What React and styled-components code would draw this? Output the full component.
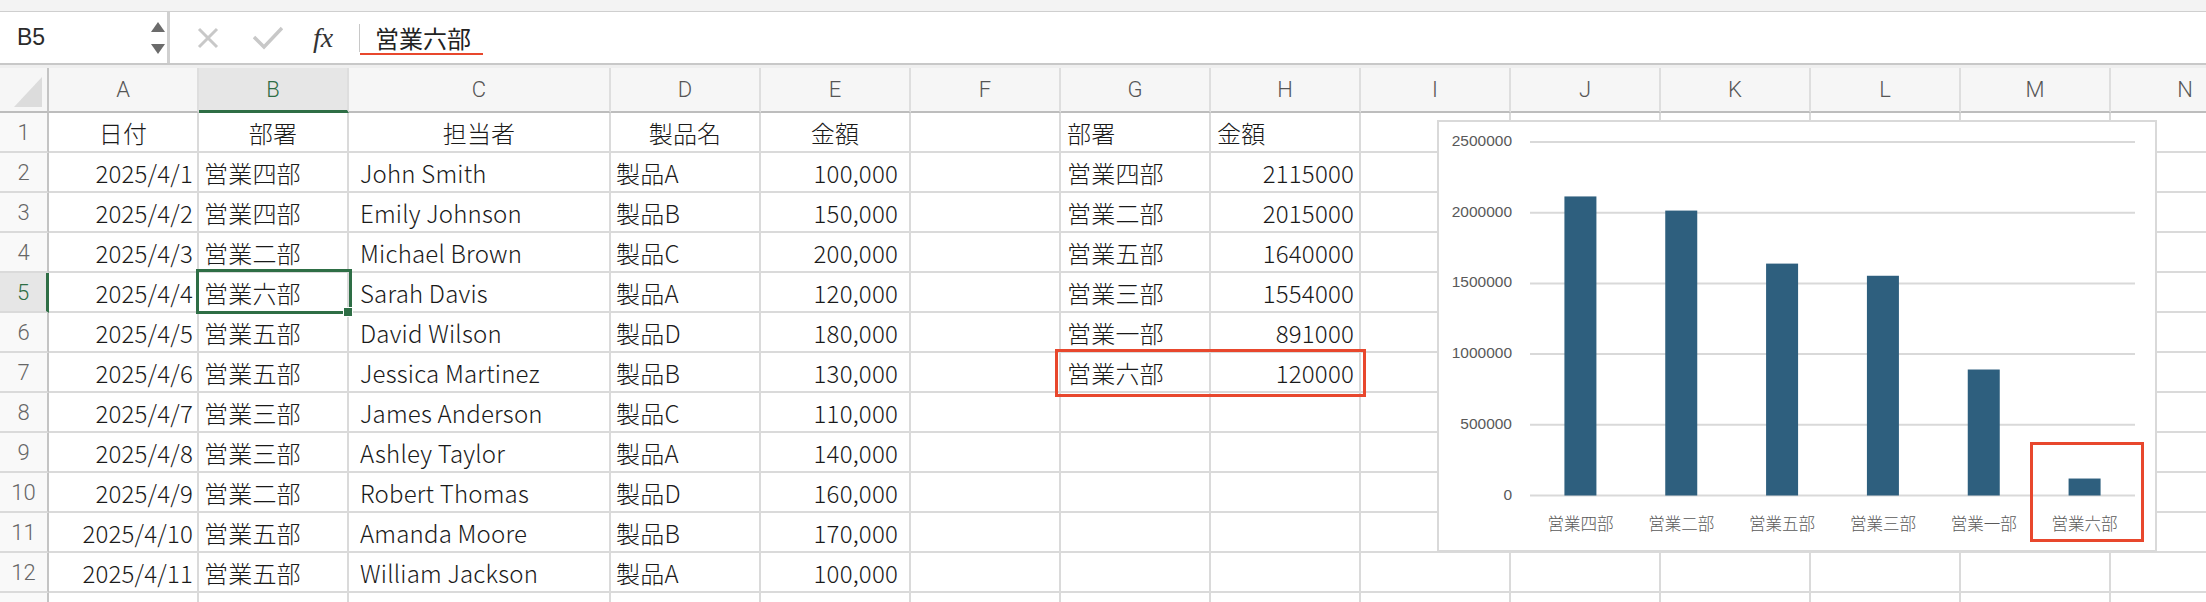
import React from "react";
import styled, { createGlobalStyle, css } from "styled-components";

const GREEN = "#2e6e45";
const RED = "#e8472d";
const GRID = "#dadada";

const COLS = ["A", "B", "C", "D", "E", "F", "G", "H", "I", "J", "K", "L", "M", "N"];
const WIDTHS = [150, 150, 262, 150, 150, 150, 150, 150, 150, 150, 150, 150, 150, 150];

// per column: alignment + inner padding
const COL_STYLE = {
  A: { align: "right", pad: "0 4px 0 0" },
  B: { align: "left", pad: "0 0 0 5px" },
  C: { align: "left", pad: "0 0 0 11px" },
  D: { align: "left", pad: "0 0 0 5px" },
  E: { align: "right", pad: "0 11px 0 0" },
  G: { align: "left", pad: "0 0 0 6px" },
  H: { align: "right", pad: "0 5px 0 0" }
};

const SALES = [
  ["2025/4/1", "営業四部", "John Smith", "製品A", "100,000"],
  ["2025/4/2", "営業四部", "Emily Johnson", "製品B", "150,000"],
  ["2025/4/3", "営業二部", "Michael Brown", "製品C", "200,000"],
  ["2025/4/4", "営業六部", "Sarah Davis", "製品A", "120,000"],
  ["2025/4/5", "営業五部", "David Wilson", "製品D", "180,000"],
  ["2025/4/6", "営業五部", "Jessica Martinez", "製品B", "130,000"],
  ["2025/4/7", "営業三部", "James Anderson", "製品C", "110,000"],
  ["2025/4/8", "営業三部", "Ashley Taylor", "製品A", "140,000"],
  ["2025/4/9", "営業二部", "Robert Thomas", "製品D", "160,000"],
  ["2025/4/10", "営業五部", "Amanda Moore", "製品B", "170,000"],
  ["2025/4/11", "営業五部", "William Jackson", "製品A", "100,000"],
  // row 13 is only a sliver at the bottom edge
  ["", "", "", "", ""]
];

const SUMMARY = [
  ["営業四部", 2115000],
  ["営業二部", 2015000],
  ["営業五部", 1640000],
  ["営業三部", 1554000],
  ["営業一部", 891000],
  ["営業六部", 120000]
];

const GlobalStyle = createGlobalStyle`
  html, body {
    margin: 0;
    padding: 0;
    background: #ffffff;
    overflow: hidden;
  }
  body {
    font-family: "Noto Sans CJK JP", "Liberation Sans", sans-serif;
    color: #1a1a1a;
  }
`;

const Window = styled.div`
  width: 2206px;
  height: 602px;
  display: flex;
  flex-direction: column;
  overflow: hidden;
`;

const TopStrip = styled.div`
  height: 11px;
  background: #f3f3f3;
  border-bottom: 1px solid #cfcfcf;
`;

const FormulaBar = styled.div`
  height: 51px;
  display: flex;
  background: #ffffff;
  border-bottom: 2px solid #c8c8c8;
`;

const NameBox = styled.div`
  width: 148px;
  padding: 0 2px 0 17px;
  display: flex;
  align-items: center;
  justify-content: space-between;
  border-right: 3px solid #d0d0d0;
  font-family: "Liberation Sans", sans-serif;
  font-size: 23px;
  color: #2b2b2b;
`;

const Spinner = styled.div`
  display: flex;
  flex-direction: column;
  gap: 12px;
`;

const Arrow = styled.span`
  width: 0;
  height: 0;
  border-left: 7px solid transparent;
  border-right: 7px solid transparent;
  ${p =>
    p.$down
      ? css`border-top: 10px solid #6b6b6b;`
      : css`border-bottom: 10px solid #6b6b6b;`}
`;

const FormulaArea = styled.div`
  flex: 1;
  display: flex;
  align-items: center;
  padding-left: 27px;
`;

const Tool = styled.div`
  display: flex;
  align-items: center;
  margin-left: ${p => p.$ml || 0}px;
`;

const Fx = styled.span`
  margin-left: 30px;
  width: 30px;
  font-family: "Liberation Serif", serif;
  font-style: italic;
  font-size: 28px;
  color: #333333;
  line-height: 1;
`;

const Divider = styled.span`
  margin-left: 16px;
  width: 1px;
  height: 28px;
  background: #c8c8c8;
`;

const FormulaText = styled.span`
  align-self: flex-start;
  margin-top: 11px;
  padding: 0 12px 0 15px;
  line-height: 30px;
  font-size: 24px;
  color: #222222;
  border-bottom: 2px solid ${RED};
`;

const Gap = styled.div`
  height: 3px;
  background: #efefef;
`;

const Sheet = styled.div`
  position: relative;
  flex: 1;
  overflow: hidden;
`;

const Grid = styled.div`
  display: grid;
  grid-template-columns: 49px ${WIDTHS.map(w => `${w}px`).join(" ")};
  grid-template-rows: 45px;
  grid-auto-rows: 40px;
`;

const Corner = styled.div`
  position: relative;
  background: #f6f6f6;
  border-right: 2px solid #c4c4c4;
  border-bottom: 2px solid #bdbdbd;
  &::after {
    content: "";
    position: absolute;
    right: 5px;
    bottom: 4px;
    width: 28px;
    height: 30px;
    background: #dcdcdc;
    clip-path: polygon(100% 0, 100% 100%, 0 100%);
  }
`;

const ColHead = styled.div`
  display: flex;
  align-items: center;
  justify-content: center;
  background: ${p => (p.$active ? "#e6e6e6" : "#f6f6f6")};
  border-right: 2px solid #dedede;
  border-bottom: ${p => (p.$active ? `3px solid ${GREEN}` : "2px solid #bdbdbd")};
  font-family: "Roboto", "Liberation Sans", sans-serif;
  font-weight: 300;
  font-size: 22px;
  color: ${p => (p.$active ? GREEN : "#555555")};
`;

const RowHead = styled.div`
  display: flex;
  align-items: center;
  justify-content: center;
  background: ${p => (p.$active ? "#e6e6e6" : "#f9f9f9")};
  border-right: ${p => (p.$active ? `3px solid ${GREEN}` : "2px solid #c4c4c4")};
  border-bottom: 2px solid ${GRID};
  font-family: "Roboto", "Liberation Sans", sans-serif;
  font-weight: 300;
  font-size: 22px;
  color: ${p => (p.$active ? GREEN : "#666666")};
`;

const Cell = styled.div`
  position: relative;
  display: flex;
  align-items: center;
  justify-content: ${p =>
    p.$align === "right" ? "flex-end" : p.$align === "center" ? "center" : "flex-start"};
  padding: ${p => p.$pad || "0"};
  border-right: 2px solid ${GRID};
  border-bottom: 2px solid ${GRID};
  font-size: 24px;
  font-weight: 300;
  letter-spacing: 0.2px;
  white-space: nowrap;
  overflow: visible;
  ${p =>
    p.$selected &&
    css`
      &::after {
        content: "";
        position: absolute;
        top: -4px;
        left: -3px;
        right: -5px;
        bottom: -3px;
        border: 3px solid ${GREEN};
        z-index: 3;
        pointer-events: none;
      }
      &::before {
        content: "";
        position: absolute;
        right: -5px;
        bottom: -5px;
        width: 8px;
        height: 8px;
        background: ${GREEN};
        outline: 1px solid #ffffff;
        z-index: 4;
      }
    `}
`;

const Highlight = styled.div`
  position: absolute;
  left: 1055px;
  top: 281px;
  width: 311px;
  height: 48px;
  box-sizing: border-box;
  border: 3px solid ${RED};
  z-index: 5;
`;

const ChartFrame = styled.div`
  position: absolute;
  left: 1437px;
  top: 52px;
  width: 720px;
  height: 432px;
  box-sizing: border-box;
  background: #ffffff;
  border: 2px solid #d9d9d9;
  z-index: 6;
  svg {
    display: block;
  }
`;

function CancelIcon() {
  return (
    <svg width="22" height="22" viewBox="0 0 22 22">
      <path d="M2 2 L20 20 M20 2 L2 20" stroke="#c8c8c8" strokeWidth="3" fill="none" />
    </svg>
  );
}

function ConfirmIcon() {
  return (
    <svg width="30" height="24" viewBox="0 0 30 24">
      <path d="M1 11 L11 21 L29 2" stroke="#c8c8c8" strokeWidth="3.5" fill="none" />
    </svg>
  );
}

function BarChart() {
  const max = 2500000;
  const top = 20;
  const base = 373.5;
  const step = (base - top) / 5;
  const x0 = 91;
  const x1 = 696;
  const band = (x1 - x0) / SUMMARY.length;
  const ticks = [0, 1, 2, 3, 4, 5];

  return (
    <svg width="716" height="428" viewBox="0 0 716 428">
      {ticks.map(i => {
        const y = base - i * step;
        return (
          <g key={i}>
            <line x1={x0} x2={x1} y1={y} y2={y} stroke="#d9d9d9" strokeWidth="2" />
            <text
              x="73"
              y={y}
              textAnchor="end"
              dominantBaseline="middle"
              fontFamily="Liberation Sans, sans-serif"
              fontSize="15.5"
              fill="#595959"
            >
              {i * 500000}
            </text>
          </g>
        );
      })}
      {SUMMARY.map(([name, v], i) => {
        const cx = x0 + band * (i + 0.5);
        const h = (v / max) * (base - top);
        return (
          <g key={name}>
            <rect x={cx - 16} y={base - h} width="32" height={h} fill="#2e5f7e" />
            <text
              x={cx}
              y="404"
              textAnchor="middle"
              dominantBaseline="middle"
              fontFamily="Noto Sans CJK JP, sans-serif"
              fontSize="16.5"
              fontWeight="300"
              fill="#595959"
            >
              {name}
            </text>
          </g>
        );
      })}
      <rect x="592.5" y="321.5" width="111" height="97" fill="none" stroke={RED} strokeWidth="3" />
    </svg>
  );
}

function buildRows() {
  const rows = [];
  rows.push({ A: "日付", B: "部署", C: "担当者", D: "製品名", E: "金額", G: "部署", H: "金額", header: true });
  SALES.forEach((s, i) => {
    const r = { A: s[0], B: s[1], C: s[2], D: s[3], E: s[4] };
    if (SUMMARY[i]) {
      r.G = SUMMARY[i][0];
      r.H = String(SUMMARY[i][1]);
    }
    rows.push(r);
  });
  return rows;
}

export default function App() {
  const rows = buildRows();

  return (
    <Window>
      <GlobalStyle />
      <TopStrip />
      <FormulaBar>
        <NameBox>
          <span>B5</span>
          <Spinner>
            <Arrow />
            <Arrow $down />
          </Spinner>
        </NameBox>
        <FormulaArea>
          <Tool>
            <CancelIcon />
          </Tool>
          <Tool $ml={34}>
            <ConfirmIcon />
          </Tool>
          <Fx>fx</Fx>
          <Divider />
          <FormulaText>営業六部</FormulaText>
        </FormulaArea>
      </FormulaBar>
      <Gap />
      <Sheet>
        <Grid>
          <Corner />
          {COLS.map(c => (
            <ColHead key={c} $active={c === "B"}>
              {c}
            </ColHead>
          ))}
          {rows.map((r, ri) => {
            const rowNo = ri + 1;
            return (
              <React.Fragment key={rowNo}>
                <RowHead $active={rowNo === 5}>{rowNo <= 12 ? rowNo : ""}</RowHead>
                {COLS.map(c => {
                  const st = COL_STYLE[c] || { align: "left", pad: "0" };
                  const centered = r.header && "ABCDE".includes(c);
                  const leftHead = r.header && (c === "G" || c === "H");
                  return (
                    <Cell
                      key={c}
                      $align={centered ? "center" : leftHead ? "left" : st.align}
                      $pad={centered ? "0" : leftHead ? "0 0 0 6px" : st.pad}
                      $selected={rowNo === 5 && c === "B"}
                    >
                      {r[c] || ""}
                    </Cell>
                  );
                })}
              </React.Fragment>
            );
          })}
        </Grid>
        <Highlight />
        <ChartFrame>
          <BarChart />
        </ChartFrame>
      </Sheet>
    </Window>
  );
}
